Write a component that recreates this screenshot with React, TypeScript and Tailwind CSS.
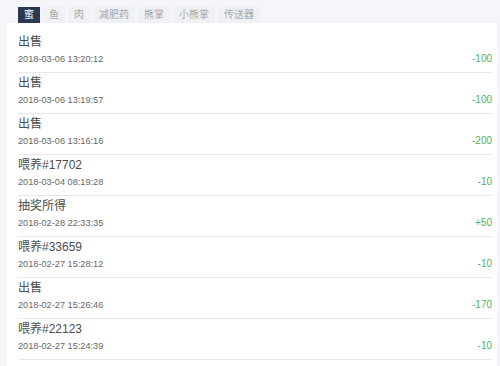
import React from "react";

const tabs = ["蜜", "鱼", "肉", "减肥药", "熊掌", "小熊掌", "传送器"];

const rows = [
  { t: "出售", d: "2018-03-06 13:20:12", a: "-100" },
  { t: "出售", d: "2018-03-06 13:19:57", a: "-100" },
  { t: "出售", d: "2018-03-06 13:16:16", a: "-200" },
  { t: "喂养#17702", d: "2018-03-04 08:19:28", a: "-10" },
  { t: "抽奖所得", d: "2018-02-28 22:33:35", a: "+50" },
  { t: "喂养#33659", d: "2018-02-27 15:28:12", a: "-10" },
  { t: "出售", d: "2018-02-27 15:26:46", a: "-170" },
  { t: "喂养#22123", d: "2018-02-27 15:24:39", a: "-10" },
];

export default function App() {
  return (
    <div
      className="w-[500px] h-[366px] overflow-hidden bg-[#f5f5fa] pt-[7px] pl-[7px] pr-[3px]"
      style={{ fontFamily: '"Liberation Sans", "Noto Sans CJK SC", sans-serif' }}
    >
      <div className="flex gap-[3px] pl-[11px] h-[16px]">
        {tabs.map((t, i) => (
          <div
            key={t}
            className={
              i === 0
                ? "h-full px-[6px] flex items-center text-[10px] leading-none bg-[#2b3a52] text-white"
                : "h-full px-[6px] flex items-center text-[10px] leading-none bg-[#f0f1f4] text-[#a8a8a8]"
            }
          >
            {t}
          </div>
        ))}
      </div>
      <div className="h-[343px] bg-white pl-[11px] pr-[5px] pt-[9px]">
        {rows.map((r, i) => (
          <div key={i} className="h-[41px] pt-[3px] border-b border-[#e8e8e8] overflow-hidden">
            <div className="h-[14px] text-[12px] leading-[14px] text-[#4d4d4d]">{r.t}</div>
            <div className="mt-[3px] h-[14px] flex justify-between items-center text-[9.2px] leading-[14px]">
              <span className="text-[#666]">{r.d}</span>
              <span className="text-[#56b056] text-[10px]">{r.a}</span>
            </div>
          </div>
        ))}
      </div>
    </div>
  );
}
